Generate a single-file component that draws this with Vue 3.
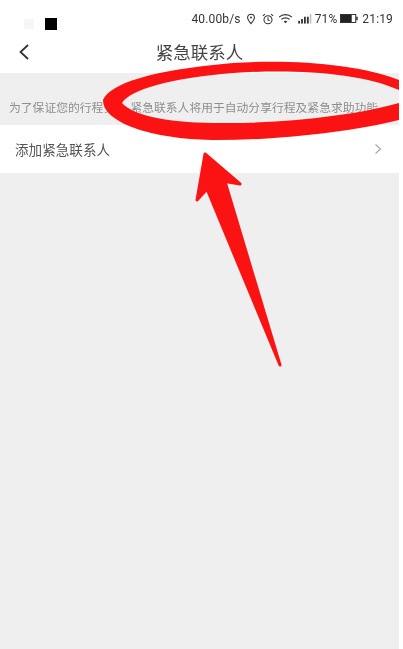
<script setup>
const title = '紧急联系人'
const noticeHead = '为了保证您的行程'
const noticeHidden = '安全，'
const noticeTail = '紧急联系人将用于自动分享行程及紧急求助功能'
const addLabel = '添加紧急联系人'
</script>

<template>
  <div class="page">
    <div class="screen">
      <div class="top">
        <div class="status">
          <div class="status-left">
            <span class="ghost"></span>
            <span class="square"></span>
          </div>
          <div class="status-right">
            <span class="speed">40.00b/s</span>
            <svg class="ic pin" viewBox="0 0 12 14" width="10" height="12">
              <path d="M6 1.200a4.100 4.100 0 0 0-4.100 4.100C1.900 8 6 12.600 6 12.600S10.100 8 10.100 5.300A4.100 4.100 0 0 0 6 1.200z" fill="none" stroke="#333" stroke-width="1.300"/>
              <circle cx="6" cy="5.300" r="1.200" fill="#333"/>
            </svg>
            <svg class="ic alarm" viewBox="0 0 14 14" width="12" height="12">
              <circle cx="7" cy="7.800" r="4.700" fill="none" stroke="#333" stroke-width="1.200"/>
              <path d="M7 5v3l2 1M1 3.400 3.400 1.200M13 3.400 10.600 1.200" fill="none" stroke="#333" stroke-width="1.200"/>
            </svg>
            <svg class="ic wifi" viewBox="0 0 16 12" width="15" height="11">
              <path d="M1 4.500C5 .800 11 .800 15 4.500M3.500 7C6 4.800 10 4.800 12.500 7" fill="none" stroke="#333" stroke-width="1.300"/>
              <path d="M6 9.200c1.200-1 2.800-1 4 0L8 11.200z" fill="#333"/>
            </svg>
            <svg class="ic signal" viewBox="0 0 15 11" width="14" height="10">
              <rect x="0" y="7.500" width="2" height="3" fill="#333"/>
              <rect x="3.200" y="5.500" width="2" height="5" fill="#333"/>
              <rect x="6.400" y="3" width="2" height="7.500" fill="#333"/>
              <rect x="9.600" y="3" width="2" height="7.500" fill="#333"/>
              <rect x="12.800" y="0" width="1.600" height="10.500" fill="#bbb"/>
            </svg>
            <span class="pct">71%</span>
            <svg class="ic battery" viewBox="0 0 20 10" width="18" height="9">
              <rect x=".5" y=".5" width="17" height="9" fill="none" stroke="#222"/>
              <rect x="1" y="1" width="12" height="8" fill="#222"/>
              <rect x="18" y="3" width="1.600" height="4" fill="#222"/>
            </svg>
            <span class="time">21:19</span>
          </div>
        </div>
        <div class="nav">
          <svg class="back" viewBox="0 0 12 18" width="12" height="18">
            <path d="M10 2 2.500 9 10 16" fill="none" stroke="#333" stroke-width="1.800"/>
          </svg>
          <span class="title">{{ title }}</span>
        </div>
      </div>
      <div class="notice">{{ noticeHead }}<span class="squeezed">{{ noticeHidden }}</span>{{ noticeTail }}</div>
      <div class="row">
        <span class="label">{{ addLabel }}</span>
        <svg class="chev" viewBox="0 0 8 12" width="8" height="12">
          <path d="M1.500 1.500 6.500 6l-5 4.500" fill="none" stroke="#aaa" stroke-width="1.200"/>
        </svg>
      </div>
      <div class="rest"></div>

      <svg class="scribble" viewBox="0 0 399 649" width="399" height="649">
        <path fill="#fb1313" fill-rule="evenodd"
          d="M103 100C110 84 150 70 233 63C290 59 360 64 399 80L420 95L399 120C350 132 280 140 217 140C160 140 103 125 103 100Z
             M122 103C130 90 170 78 233 73C290 69 360 72 399 90L420 97L399 103C360 114 300 122 233 123C180 124 135 118 122 103Z"/>
        <path fill="#fb1313" stroke="#fb1313" stroke-width="3" stroke-linejoin="round"
          d="M205 154 240 184 225 181.500 280 365 207 189 197 200Z"/>
      </svg>
    </div>
  </div>
</template>

<style scoped>
.page {
  width: 403px;
  height: 649px;
  background: #fff;
  overflow: hidden;
  font-family: "Noto Sans CJK SC", "Noto Sans", sans-serif;
}
.screen {
  position: relative;
  width: 399px;
  height: 649px;
  display: flex;
  flex-direction: column;
  overflow: hidden;
}
.top {
  background: #fff;
  height: 73px;
  flex: none;
}
.status {
  height: 37px;
  display: flex;
  justify-content: space-between;
  align-items: center;
  padding: 0 6px 0 24px;
  box-sizing: border-box;
  filter: blur(0.3px);
}
.status-left {
  display: flex;
  align-items: center;
  gap: 11px;
  padding-top: 11px;
}
.ghost {
  width: 10px;
  height: 10px;
  background: #f6f6f6;
}
.square {
  width: 12px;
  height: 12px;
  background: #000;
}
.status-right {
  display: flex;
  align-items: center;
  font-family: Roboto, "Liberation Sans", sans-serif;
  font-size: 12px;
  color: #333;
  letter-spacing: 0.15px;
}
.speed { margin-right: 5px; }
.alarm { margin-left: 6px; }
.wifi { margin-left: 4px; }
.signal { margin-left: 5px; }
.pct { margin-left: 3px; }
.battery { margin-left: 3px; }
.time { margin-left: 4px; }
.ic { flex: none; }
.nav {
  height: 36px;
  position: relative;
  display: flex;
  align-items: center;
  justify-content: center;
}
.back {
  position: absolute;
  left: 18px;
  top: 6px;
}
.title {
  font-size: 17.500px;
  color: #444;
  line-height: 30px;
  margin-top: -6px;
  filter: blur(0.3px);
}
.notice {
  background: #efefef;
  height: 52px;
  flex: none;
  box-sizing: border-box;
  padding: 25px 0 0 9px;
  font-size: 11.800px;
  line-height: 18px;
  color: #8e8e8e;
  white-space: nowrap;
  overflow: hidden;
  filter: blur(0.3px);
}
.squeezed { letter-spacing: -2.800px; }
.row {
  background: #fff;
  height: 48px;
  flex: none;
  display: flex;
  align-items: center;
  justify-content: space-between;
  padding: 0 17px 0 15px;
}
.label {
  font-size: 13.600px;
  color: #555;
  filter: blur(0.3px);
}
.chev { flex: none; }
.rest {
  flex: 1;
  background: #efefef;
}
.scribble {
  position: absolute;
  left: 0;
  top: 0;
  pointer-events: none;
}
</style>
